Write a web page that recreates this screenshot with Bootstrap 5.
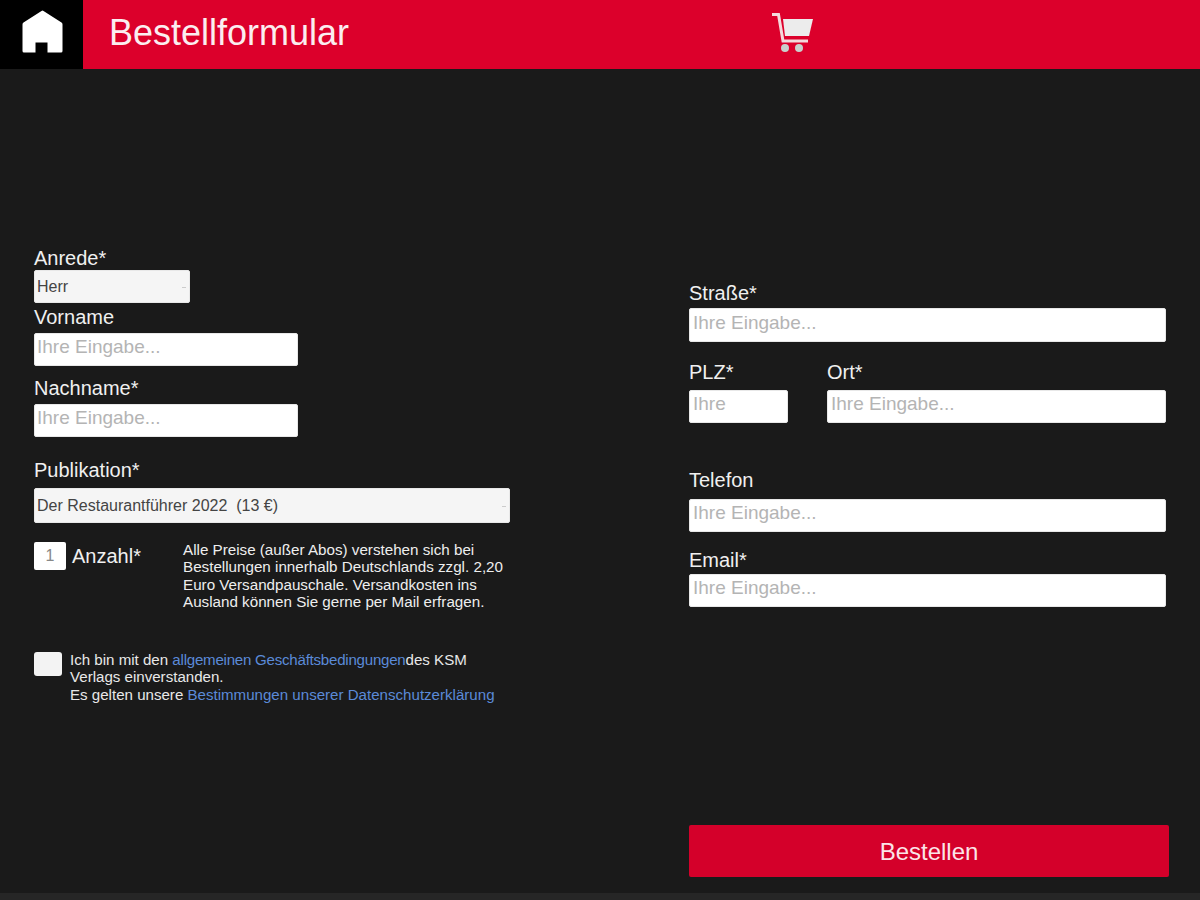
<!DOCTYPE html>
<html lang="de">
<head>
<meta charset="utf-8">
<title>Bestellformular</title>
<link href="https://cdn.jsdelivr.net/npm/bootstrap@5.3.0/dist/css/bootstrap.min.css" rel="stylesheet">
<style>
html,body{height:100%}
body{background:#1a1a1a;color:#f2f2f2;font-family:"Liberation Sans",Arial,sans-serif;overflow:hidden}
.app-shell{height:900px}
.top-bar{height:69px;background:#dc002b}
.home-box{width:83px;background:#000}
.home-icon{margin-bottom:6px}
.bar-title{font-size:36px;line-height:1;margin-left:26px;margin-top:-3px;color:#fbeef0}
.cart-slot{left:771px;top:12px;position:absolute}
.form-area{flex:1 1 auto;min-height:0}
.col-left{width:689px;padding:179px 0 0 34px}
.col-right{width:481px;padding:214px 0 16px 0}
.fld-label{display:block;font-size:20px;line-height:20px;color:#f0f0f0;margin:0}
.fld-input,.fld-select{display:block;border:1px solid #e8e8e8;border-radius:2px;color:#555;padding:0 3px;outline:0;font-family:inherit}
.fld-input{background:#fff;font-size:19px;height:33px;padding-bottom:5px}
.col-left .fld-input,.col-left .fld-select{padding-left:2px}
.fld-input::placeholder{color:#b4b4b4;opacity:1}
.fld-select{background:#f5f5f5;font-size:16px;height:33px;appearance:none;color:#444;padding-top:1px}
.sel-wrap{position:relative}
.sel-wrap::after{content:"";position:absolute;right:4px;top:50%;width:4px;height:1px;background:#ccc}
.w-name{width:264px}
.anrede-wrap{width:156px;margin-top:2px}
.pub-wrap{width:476px;margin-top:8px}
.pub-wrap .fld-select{height:35px}
.qty-row{margin-top:19px}
.qty-box{width:32px;height:28px;text-align:center;background:#fff;color:#888;font-size:16px;line-height:28px;border-radius:2px}
.qty-label{font-size:20px;line-height:28px;margin-left:6px;width:111px;flex:none;color:#f0f0f0}
.note-text{font-size:15.2px;line-height:17.3px;width:325px;margin:-1px 0 0;color:#eee}
.agree-row{margin-top:41px}
.agree-box{width:28px;height:24px;background:#f3f3f3;border-radius:3px;flex:none;margin-top:1px;margin-right:8px}
.agree-text{font-size:15.1px;line-height:17.3px;width:430px;margin:0;color:#e8e8e8}
.agree-text a{color:#5b8ad8;text-decoration:none}
.agree-text .tight-link{letter-spacing:-.24px}
.full-input{width:477px}
.plz-input{width:99px}
.ort-input{width:339px}
.plz-col{margin-right:39px}
.buy-btn{width:480px;height:52px;background:#d4002a;color:#fbe4e8;font-size:24px;border:0;border-radius:2px;margin-top:auto;padding:2px 0 0}
.buy-btn:hover{background:#d4002a;color:#fbe4e8}
.foot-strip{height:7px;background:#262626;flex:none}
</style>
</head>
<body>
<div class="app-shell d-flex flex-column position-relative">
  <header class="top-bar d-flex align-items-center">
    <div class="home-box h-100 d-flex align-items-center justify-content-center">
      <svg class="home-icon" width="42" height="44" viewBox="0 0 42 44" aria-label="Startseite"><path d="M20.5 1 Q21.5 .2 22.5 1 L40.5 12.5 Q41.5 13.2 41.5 14.5 V41 Q41.5 42.5 40 42.5 H26.5 V32.5 H14.5 V42.5 H3 Q1.5 42.5 1.5 41 V14.5 Q1.5 13.2 2.5 12.5 Z" fill="#fff"/></svg>
    </div>
    <div class="bar-title">Bestellformular</div>
    <svg class="cart-slot" width="44" height="42" viewBox="0 0 44 42" aria-label="Warenkorb">
      <path d="M1 2.5 H7.5 L12 29 H37" fill="none" stroke="#f4d9dc" stroke-width="3"/>
      <path d="M12 7 H42 L38 24 H14 Z" fill="#ececec"/>
      <circle cx="14" cy="36" r="4" fill="#c9d0cc"/><circle cx="28" cy="36" r="4" fill="#c9d0cc"/>
    </svg>
  </header>
  <main class="form-area d-flex">
    <form class="col-left" onsubmit="return false">
      <label class="fld-label">Anrede*</label>
      <div class="sel-wrap anrede-wrap"><select class="fld-select w-100"><option>Herr</option><option>Frau</option></select></div>
      <label class="fld-label mt-1">Vorname</label>
      <input class="fld-input w-name" placeholder="Ihre Eingabe..." style="margin-top:6px">
      <label class="fld-label" style="margin-top:12px">Nachname*</label>
      <input class="fld-input w-name" placeholder="Ihre Eingabe..." style="margin-top:6px">
      <label class="fld-label" style="margin-top:23px">Publikation*</label>
      <div class="sel-wrap pub-wrap"><select class="fld-select w-100"><option>Der Restaurantführer 2022&nbsp; (13 €)</option></select></div>
      <div class="qty-row d-flex align-items-start">
        <div class="qty-box flex-shrink-0">1</div>
        <div class="qty-label">Anzahl*</div>
        <p class="note-text">Alle Preise (außer Abos) verstehen sich bei Bestellungen innerhalb Deutschlands zzgl. 2,20 Euro Versandpauschale. Versandkosten ins Ausland können Sie gerne per Mail erfragen.</p>
      </div>
      <div class="agree-row d-flex align-items-start">
        <div class="agree-box"></div>
        <p class="agree-text">Ich bin mit den <a class="tight-link" href="#">allgemeinen Geschäftsbedingungen</a>des KSM Verlags einverstanden.<br>Es gelten unsere <a href="#">Bestimmungen unserer Datenschutzerklärung</a></p>
      </div>
    </form>
    <form class="col-right d-flex flex-column" onsubmit="return false">
      <label class="fld-label">Straße*</label>
      <input class="fld-input full-input" placeholder="Ihre Eingabe..." style="margin-top:5px;height:34px">
      <div class="d-flex" style="margin-top:20px">
        <div class="plz-col">
          <label class="fld-label">PLZ*</label>
          <input class="fld-input plz-input" placeholder="Ihre" style="margin-top:8px">
        </div>
        <div>
          <label class="fld-label">Ort*</label>
          <input class="fld-input ort-input" placeholder="Ihre Eingabe..." style="margin-top:8px">
        </div>
      </div>
      <label class="fld-label" style="margin-top:47px">Telefon</label>
      <input class="fld-input full-input" placeholder="Ihre Eingabe..." style="margin-top:9px">
      <label class="fld-label" style="margin-top:18px">Email*</label>
      <input class="fld-input full-input" placeholder="Ihre Eingabe..." style="margin-top:4px">
      <button class="btn buy-btn" type="submit">Bestellen</button>
    </form>
  </main>
  <div class="foot-strip"></div>
</div>
<script src="https://cdn.jsdelivr.net/npm/bootstrap@5.3.0/dist/js/bootstrap.bundle.min.js"></script>
</body>
</html>
